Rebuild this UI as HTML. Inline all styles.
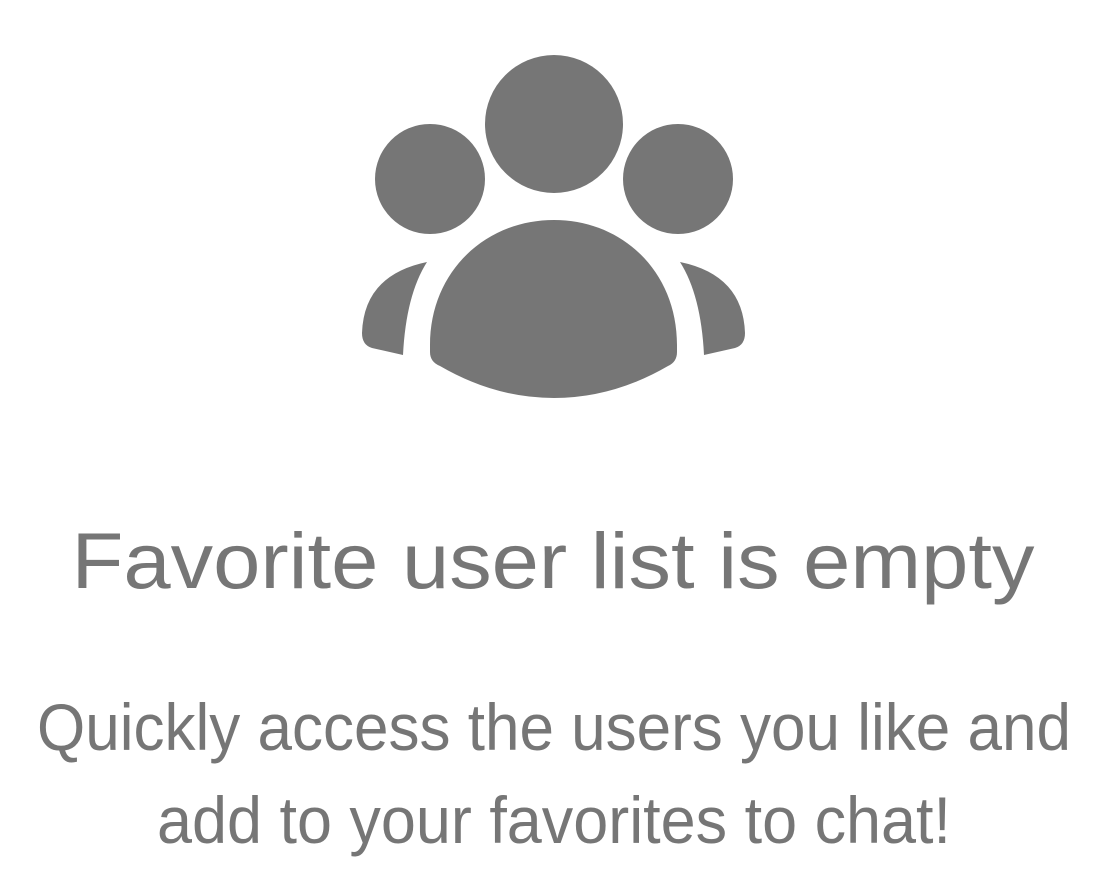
<!DOCTYPE html>
<html><head><meta charset="utf-8"><style>
html,body{margin:0;padding:0;background:#fff;width:1108px;height:872px;overflow:hidden}
svg{display:block}
text{font-family:"Liberation Sans",sans-serif;fill:#767676}
</style></head><body>
<svg width="1108" height="872" viewBox="0 0 1108 872">
<g fill="#767676">
<circle cx="554" cy="124" r="69"/>
<circle cx="430" cy="179" r="55"/>
<circle cx="678" cy="179" r="55"/>
<path d="M430,345 C430,272 485,220 554,220 C623,220 677,272 677,345 L677,352 Q677,362 668,366 Q613,398 554,398 Q495,398 440,366 Q430,362 430,352 Z"/>
<path d="M427,262 Q406,295 403,355 L372,348 Q362,345 362,333 Q364,275 427,262 Z"/>
<path d="M680,262 Q701,295 704,355 L735,348 Q745,345 745,333 Q743,275 680,262 Z"/>
</g>
<text x="553" y="588" font-size="79" text-anchor="middle" textLength="963" lengthAdjust="spacingAndGlyphs">Favorite user list is empty</text>
<text x="554" y="750" font-size="66" text-anchor="middle" textLength="1034" lengthAdjust="spacingAndGlyphs">Quickly access the users you like and</text>
<text x="554" y="843" font-size="66" text-anchor="middle" textLength="794" lengthAdjust="spacingAndGlyphs">add to your favorites to chat!</text>
</svg>
</body></html>
